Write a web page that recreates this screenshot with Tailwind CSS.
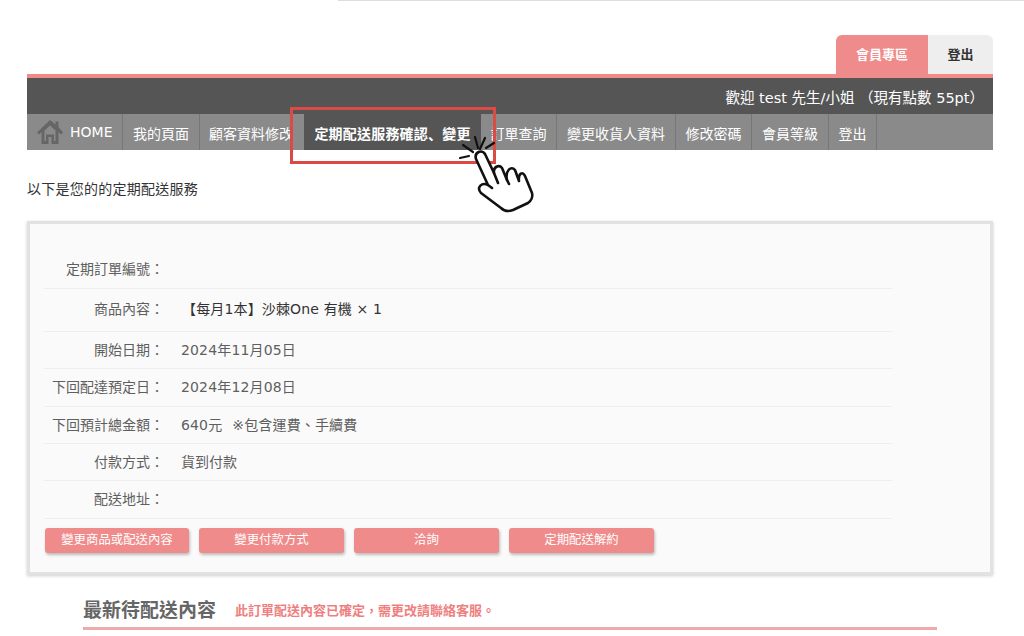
<!DOCTYPE html>
<html lang="zh-Hant">
<head>
<meta charset="UTF-8">
<title>定期配送服務</title>
<script src="https://cdn.jsdelivr.net/npm/@tailwindcss/browser@4"></script>
</head>
<body class="bg-white font-['DejaVu_Sans','Noto_Sans_CJK_TC',sans-serif] text-[14px] text-[#5f5f5f] overflow-hidden">
<div class="relative h-[636px] w-[1024px] overflow-hidden">
    <div class="ml-[338px] h-px bg-[#ddd]"></div>

    <!-- Header -->
    <header class="mx-[27px] mt-[34px] w-[966px]">
        <div class="flex h-[39px] justify-end">
            <div class="flex w-[92px] items-center justify-center rounded-tl-md bg-[#ef8b8a] text-[13px] font-bold text-white">會員專區</div>
            <div class="flex w-[65px] items-center justify-center rounded-tr-md bg-[#eee] text-[13px] font-bold text-[#333]">登出</div>
        </div>
        <div class="h-[4px] bg-[#ef8b8a]"></div>
        <div class="flex h-[36px] items-center justify-end bg-[#555] pr-[9px] pt-[6px] text-[14.5px] text-white">歡迎 test 先生/小姐 （現有點數 55pt）</div>
        <nav class="flex h-[36px] bg-[#8a8a8a] text-[14px] text-white">
            <a class="flex w-[96px] items-center gap-[6px] border-r border-[#777] pl-[9px]">
                <svg class="h-[28px] w-[28px]" viewBox="0 0 28 28" fill="#666"><path d="M14 2 1 14.500l2 2L5.500 14V26h7v-7h3v7h7V14l2.500 2.500 2-2L22.500 9V3.500h-3V6.500Z"/><path fill="#8a8a8a" d="M14 7.500 8.500 12.500V23h1.500v-6.500h8V23h1.500V12.500Z"/></svg>
                <span>HOME</span>
            </a>
            <a class="flex w-[77px] items-center justify-center border-r border-[#777] pt-[4px]">我的頁面</a>
            <a class="flex w-[104px] items-center overflow-hidden whitespace-nowrap pl-[9px] pt-[4px]">顧客資料修改</a>
            <a class="flex w-[177px] items-center justify-center bg-[#555] pt-[4px] font-bold tracking-[0.2px]">定期配送服務確認<span class="font-['Noto_Sans_CJK_SC']">、</span>變更</a>
            <a class="flex w-[76px] items-center justify-center border-r border-[#777] pt-[4px]">訂單查詢</a>
            <a class="flex w-[119px] items-center justify-center border-r border-[#777] pt-[4px]">變更收貨人資料</a>
            <a class="flex w-[76px] items-center justify-center border-r border-[#777] pt-[4px]">修改密碼</a>
            <a class="flex w-[77px] items-center justify-center border-r border-[#777] pt-[4px]">會員等級</a>
            <a class="flex w-[48px] items-center justify-center border-r border-[#777] pt-[4px]">登出</a>
        </nav>
    </header>

    <main class="mx-[27px] w-[966px]">
        <p class="mt-[29px] text-[14px] leading-[20px] tracking-[0.25px] text-[#333]">以下是您的的定期配送服務</p>

        <!-- Order card -->
        <section class="mt-[22px] h-[354px] border-[3px] border-[#e2e2e2] bg-[#fafafa] pl-[14px] pt-[30px] shadow-[0_1px_3px_rgba(0,0,0,0.2)]">
            <dl class="w-[848px]">
                <div class="flex h-[35px] items-center border-b border-[#eee] pb-[4px]"><dt class="w-[120px] text-right">定期訂單編號：</dt><dd></dd></div>
                <div class="flex h-[43px] items-center border-b border-[#eee] pb-[2px]"><dt class="w-[120px] text-right">商品內容：</dt><dd class="ml-[18px] tracking-[0.15px] text-[#333]">【每月1本】沙棘One 有機 × 1</dd></div>
                <div class="flex h-[37px] items-center border-b border-[#eee]"><dt class="w-[120px] text-right">開始日期：</dt><dd class="ml-[17px] tracking-[0.15px]">2024年11月05日</dd></div>
                <div class="flex h-[38px] items-center border-b border-[#eee]"><dt class="w-[120px] text-right">下回配達預定日：</dt><dd class="ml-[17px] tracking-[0.15px]">2024年12月08日</dd></div>
                <div class="flex h-[37px] items-center border-b border-[#eee]"><dt class="w-[120px] text-right">下回預計總金額：</dt><dd class="ml-[17px] tracking-[0.15px]">640元<span class="ml-[10px]">※包含運費<span class="font-['Noto_Sans_CJK_SC']">、</span>手續費</span></dd></div>
                <div class="flex h-[37px] items-center border-b border-[#eee]"><dt class="w-[120px] text-right">付款方式：</dt><dd class="ml-[17px]">貨到付款</dd></div>
                <div class="flex h-[38px] items-center border-b border-[#eee]"><dt class="w-[120px] text-right">配送地址：</dt><dd></dd></div>
            </dl>
            <div class="ml-px mt-[9px] flex gap-[10px] text-[12.4px] text-white">
                <a class="flex h-[25px] w-[144px] items-center justify-center rounded-[3px] bg-[#ef8b8a] shadow-[1px_2px_3px_rgba(0,0,0,0.25)]">變更商品或配送內容</a>
                <a class="flex h-[25px] w-[145px] items-center justify-center rounded-[3px] bg-[#ef8b8a] shadow-[1px_2px_3px_rgba(0,0,0,0.25)]">變更付款方式</a>
                <a class="flex h-[25px] w-[145px] items-center justify-center rounded-[3px] bg-[#ef8b8a] shadow-[1px_2px_3px_rgba(0,0,0,0.25)]">洽詢</a>
                <a class="flex h-[25px] w-[145px] items-center justify-center rounded-[3px] bg-[#ef8b8a] shadow-[1px_2px_3px_rgba(0,0,0,0.25)]">定期配送解約</a>
            </div>
        </section>

        <!-- Next delivery -->
        <section class="ml-[56px] mt-[21px] w-[854px]">
            <div class="flex h-[34px] items-center gap-[19px] border-b-[3px] border-[#efa9a8] pb-[3px]">
                <h2 class="text-[19px] font-bold text-[#666]">最新待配送內容</h2>
                <p class="text-[13px] font-bold text-[#ef7f7f]">此訂單配送內容已確定<span class="font-['Noto_Sans_CJK_SC']">，</span>需更改請聯絡客服<span class="font-['Noto_Sans_CJK_SC']">。</span></p>
            </div>
        </section>
    </main>

    <!-- Annotation over the nav -->
    <div class="absolute left-[290px] top-[107px] h-[57px] w-[206px] border-[3px] border-[#dc4a46]"></div>
    <svg class="absolute left-[455px] top-[135px] h-[80px] w-[85px]" viewBox="0 0 85 80" fill="none" stroke="#111" stroke-width="2.600" stroke-linecap="round" stroke-linejoin="round">
        <path d="M5 23 14 21M8 10 18 17M20 2 23 13M30 3 25 14M39 8 31 13" stroke-width="2.200"/>
        <path fill="#fff" d="M33 50 21 24C19 17 27 14 30 19L39 38C38 32 44 29 47 33L52 45C50 36 56 30 60 35L64 46C63 38 68 36 70 41L77 58C78 62 76 66 73 68L58 75C53 77 49 76 46 73L26 58C21 52 27 47 33 50L37 53"/>
        <path d="M39 38 43 48M52 45 54 49"/>
    </svg>
</div>
</body>
</html>
